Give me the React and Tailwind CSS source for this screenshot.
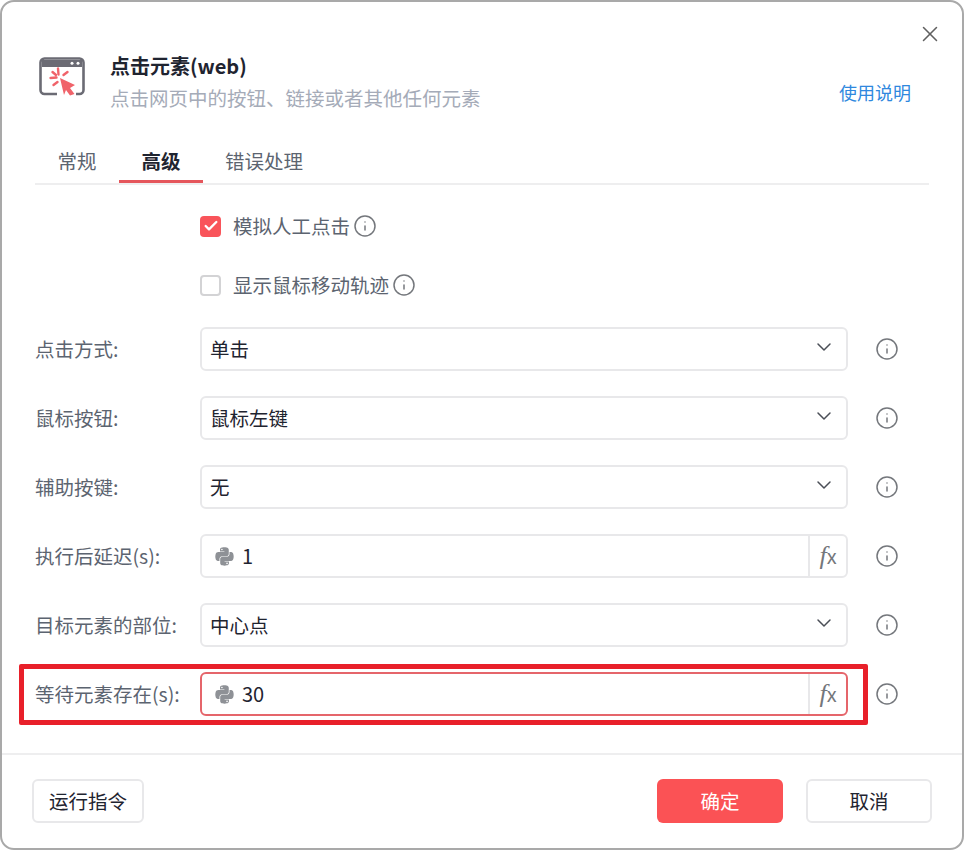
import React from 'react';
import { ChevronDown, Info, X, Check } from 'lucide-react';
import { FaPython } from 'react-icons/fa';

const rows = [
  { label: '点击方式:', value: '单击' },
  { label: '鼠标按钮:', value: '鼠标左键' },
  { label: '辅助按键:', value: '无' },
  { label: '执行后延迟(s):', value: '1', py: true },
  { label: '目标元素的部位:', value: '中心点' },
  { label: '等待元素存在(s):', value: '30', py: true, active: true },
];

const WindowIcon = () => (
  <svg width="46" height="40" viewBox="0 0 46 40" fill="none">
    <path d="M1.500 5.500a4 4 0 0 1 4-4h35a4 4 0 0 1 4 4V33a4 4 0 0 1-4 4h-3.500M1.500 5.500V33a4 4 0 0 0 4 4H18" stroke="#6b6b74" strokeWidth="2.600" />
    <path d="M3 3h40v7H3z" fill="#6b6b74" />
    <circle cx="33" cy="6.300" r="1.500" fill="#fff" />
    <circle cx="39" cy="6.300" r="1.500" fill="#fff" />
    <path d="M21 21l15 7-5 3 4.500 6-4.500 1.500-4-5.500-2 5z" fill="#f0636a" />
    <path d="M19 11.500l.500 6M11.500 21l6-.500M14.500 28l4-3M13.500 15l3.500 3M28.500 15l-4 3" stroke="#f0636a" strokeWidth="2.400" strokeLinecap="round" />
  </svg>
);

const Row = ({ label, value, py, active }) => (
  <div className="flex items-center h-11">
    <div className="w-[165px] shrink-0 text-[#5c6470]">{label}</div>
    <div className={`flex items-center w-[648px] h-11 rounded-md border-2 ${active ? 'border-[#e5656b]' : 'border-[#e8e8ea]'}`}>
      {py && <FaPython size={21} className="ml-[12px] mr-[7px] shrink-0 text-[#8e9196]" />}
      <span className={`flex-1 text-[#1f2430] ${py ? 'text-[20px]' : 'pl-[8px]'}`}>{value}</span>
      {py ? (
        <span className="flex items-center justify-center w-[38px] h-full border-l-2 border-[#e8e8ea] text-[#74777c]">
          <span className="italic text-[26px] leading-none [font-family:'Liberation_Serif',serif]">f</span>
          <span className="text-[20px] leading-none">x</span>
        </span>
      ) : (
        <ChevronDown size={24} strokeWidth={1.5} className="mr-[10px] -mt-1 text-[#4b4f57]" />
      )}
    </div>
    <Info size={24} strokeWidth={1.5} className="ml-[27px] text-[#74777c]" />
  </div>
);

export default function App() {
  return (
    <div className="w-[964px] h-[850px] bg-white text-[19.5px] leading-[26px] [font-family:'Noto_Sans_CJK_SC','Noto_Sans',sans-serif]">
      <div className="relative flex flex-col h-full rounded-[14px] border-2 border-[#a9a9a9] bg-white">
        <div className="flex justify-end pt-[19px] pr-[19px]">
          <X size={26} strokeWidth={1.4} className="text-[#606060]" />
        </div>

        <div className="flex items-start mt-[10px] pl-[37px] pr-[51px]">
          <WindowIcon />
          <div className="ml-[25px] flex-1 -mt-1">
            <div className="text-[20px] leading-[26px] font-bold text-[#1f2430]">点击元素(web)</div>
            <div className="mt-[6px] text-[19.5px] text-[#a5abb8]">点击网页中的按钮、链接或者其他任何元素</div>
          </div>
          <div className="mt-[22px] text-[18px] text-[#2f88de]">使用说明</div>
        </div>

        <div className="flex mt-[31px] mx-[33px] h-[43px] border-b-2 border-[#eeeeef] text-[#5c6470]">
          <div className="w-[84px] text-center pt-[6px]">常规</div>
          <div className="w-[84px] h-[41px] text-center pt-[6px] font-bold text-[#1f2430] border-b-[3px] border-[#e5565c]">高级</div>
          <div className="w-[122px] text-center pt-[6px]">错误处理</div>
        </div>

        <div className="flex flex-col pl-[33px]">
          <div className="flex items-center ml-[165px] mt-[28px] h-[26px] text-[#5c6470]">
            <span className="flex items-center justify-center w-[21px] h-[21px] rounded-[4px] bg-[#f9545a]">
              <Check size={16} strokeWidth={3.5} className="text-white" />
            </span>
            <span className="ml-[12px]">模拟人工点击</span>
            <Info size={24} strokeWidth={1.5} className="ml-[3px] text-[#74777c]" />
          </div>
          <div className="flex items-center ml-[165px] mt-[33px] h-[26px] text-[#5c6470]">
            <span className="w-[21px] h-[21px] rounded-[4px] border-2 border-[#d3d3d5]" />
            <span className="ml-[12px]">显示鼠标移动轨迹</span>
            <Info size={24} strokeWidth={1.5} className="ml-[3px] text-[#74777c]" />
          </div>
          <div className="flex flex-col gap-[25px] mt-[29px]">
            {rows.map((r) => (
              <Row key={r.label} {...r} />
            ))}
          </div>
        </div>

        {/* red annotation box drawn over the last row */}
        <div className="absolute left-[17px] top-[662px] w-[849px] h-[61px] rounded-[2px] border-[5px] border-[#e8202a]" />

        <div className="flex items-center justify-between mt-[37px] h-[94px] pl-[30px] pr-[30px] border-t-2 border-[#eeeeef] text-[#1f2430]">
          <div className="flex items-center justify-center w-[112px] h-11 rounded-md border-2 border-[#e8e8ea]">运行指令</div>
          <div className="flex gap-[23px]">
            <div className="flex items-center justify-center w-[126px] h-11 rounded-md bg-[#fb5255] text-white">确定</div>
            <div className="flex items-center justify-center w-[126px] h-11 rounded-md border-2 border-[#e8e8ea]">取消</div>
          </div>
        </div>
      </div>
    </div>
  );
}
